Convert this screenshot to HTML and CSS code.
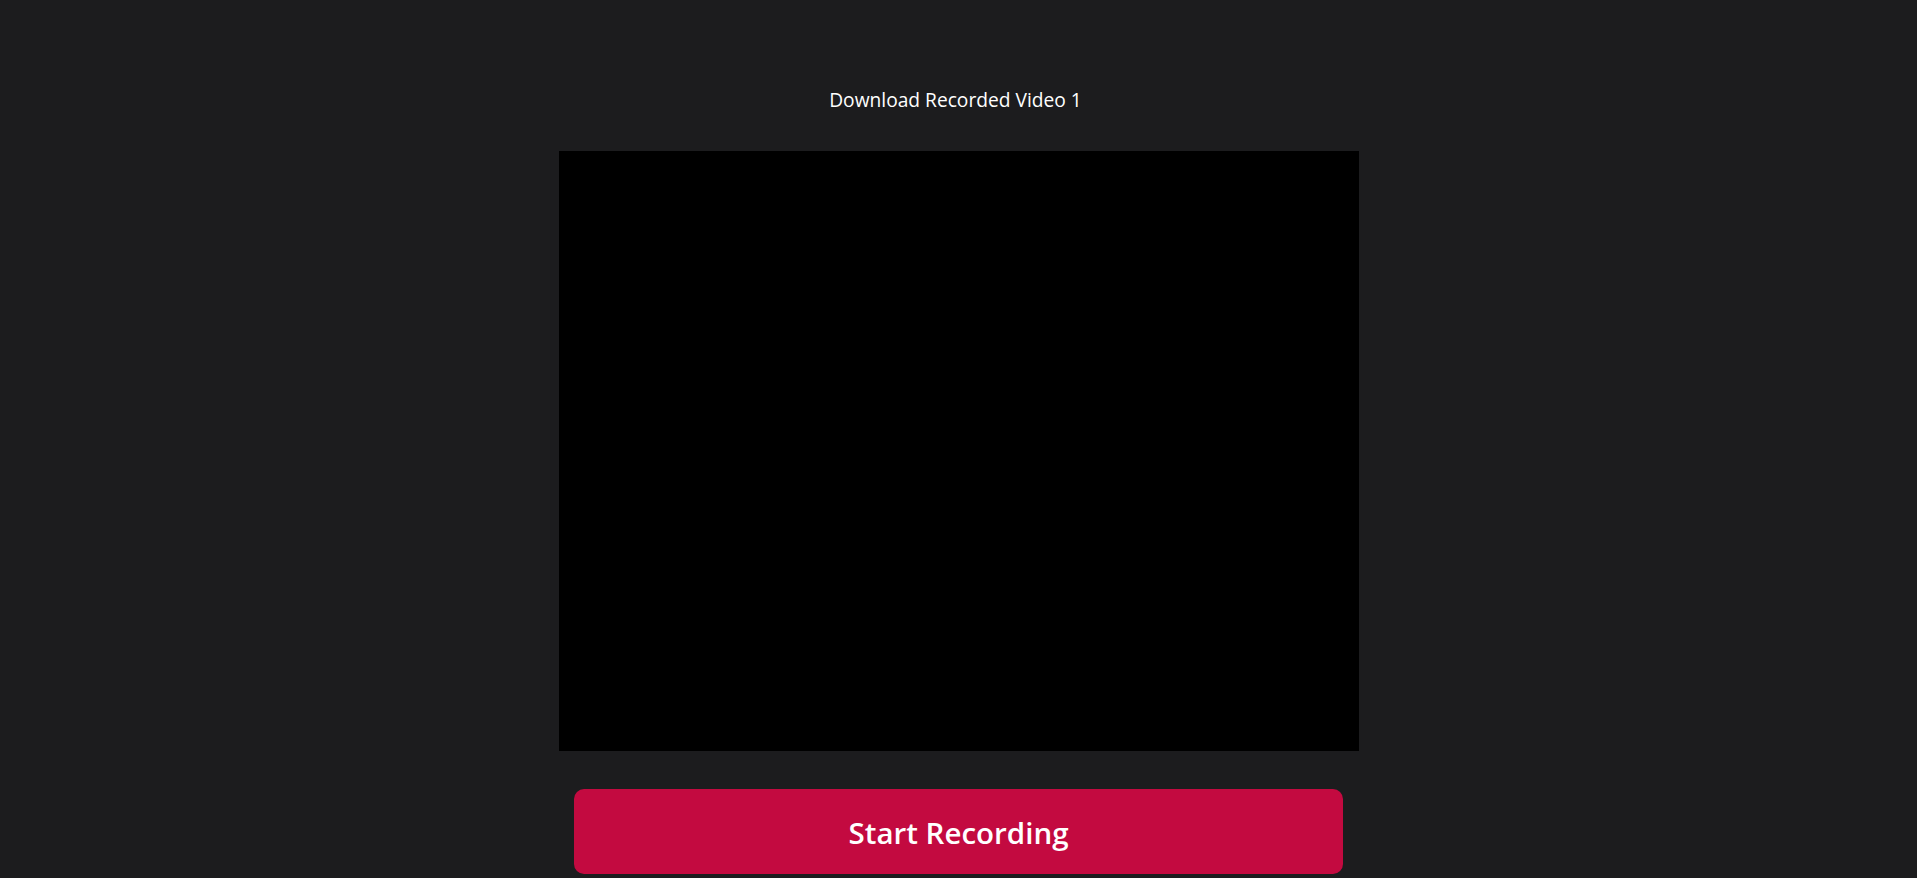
FILE: index.html
```html
<!DOCTYPE html>
<html>
<head>
<meta charset="utf-8">
<link rel="stylesheet" href="styles.css">
</head>
<body>
<main class="app">
  <a class="download" href="#">Download Recorded Video 1</a>
  <div class="video"></div>
  <button class="record">Start Recording</button>
</main>
</body>
</html>
```
FILE: styles.css
```css
html, body {
  margin: 0;
  height: 100%;
  background: #1c1c1e;
  overflow: hidden;
}
.app {
  display: flex;
  flex-direction: column;
  align-items: center;
  padding-top: 86px;
  font-family: "Open Sans", "Noto Sans", sans-serif;
}
.download {
  color: #ffffff;
  text-decoration: none;
  font-size: 19.2px;
  line-height: 28px;
  height: 28px;
  margin-right: 6px;
}
.video {
  width: 800px;
  height: 600px;
  background: #000;
  margin-top: 37px;
}
.record {
  margin-top: 38px;
  width: 769px;
  height: 85px;
  border: none;
  border-radius: 10px;
  background: #c30a40;
  color: #fff;
  font-family: "Open Sans", "Noto Sans", sans-serif;
  font-weight: 600;
  font-size: 29.5px;
  padding: 2px 0 0;
}
```
